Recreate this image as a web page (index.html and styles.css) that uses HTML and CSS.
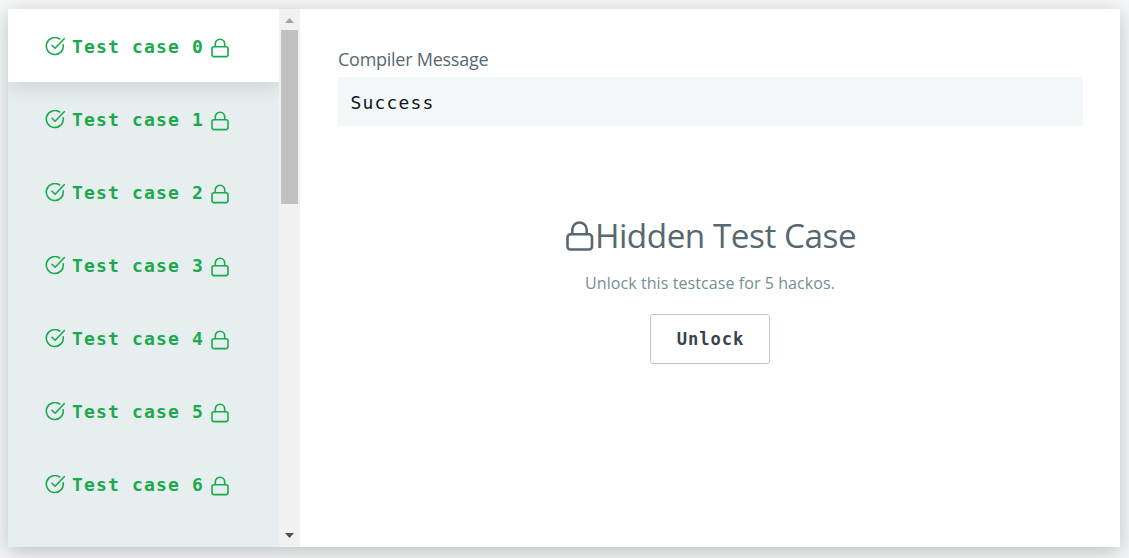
FILE: index.html
```html
<!DOCTYPE html>
<html lang="en">
<head>
<meta charset="utf-8">
<title>Test cases</title>
<link rel="stylesheet" href="styles.css">
</head>
<body>
<svg class="defs" width="0" height="0">
  <symbol id="check" viewBox="0 0 20 20"><path d="M14.600 2A8.500 8.500 0 1 0 18.200 7.700M7 8.300l3.100 3L19.200 1.700"/></symbol>
  <symbol id="lock" viewBox="0 0 18 20"><rect x="1" y="8.700" width="16" height="9.900" rx="2"/><path d="M4.300 8.500V5.900a4.700 4.700 0 0 1 9.400 0v2.600"/></symbol>
</svg>
<main class="panel">
  <nav class="cases">
    <button class="case active"><svg class="check"><use href="#check"/></svg><span>Test case 0</span><svg class="lock"><use href="#lock"/></svg></button>
    <button class="case"><svg class="check"><use href="#check"/></svg><span>Test case 1</span><svg class="lock"><use href="#lock"/></svg></button>
    <button class="case"><svg class="check"><use href="#check"/></svg><span>Test case 2</span><svg class="lock"><use href="#lock"/></svg></button>
    <button class="case"><svg class="check"><use href="#check"/></svg><span>Test case 3</span><svg class="lock"><use href="#lock"/></svg></button>
    <button class="case"><svg class="check"><use href="#check"/></svg><span>Test case 4</span><svg class="lock"><use href="#lock"/></svg></button>
    <button class="case"><svg class="check"><use href="#check"/></svg><span>Test case 5</span><svg class="lock"><use href="#lock"/></svg></button>
    <button class="case"><svg class="check"><use href="#check"/></svg><span>Test case 6</span><svg class="lock"><use href="#lock"/></svg></button>
  </nav>
  <div class="scrollbar">
    <svg class="arrow" viewBox="0 0 9 5"><path fill="#a3a3a3" d="M0 5 4.500 0 9 5z"/></svg>
    <div class="thumb"></div>
    <svg class="arrow down" viewBox="0 0 9 5"><path fill="#505050" d="M0 0h9L4.500 5z"/></svg>
  </div>
  <section class="detail">
    <div class="label">Compiler Message</div>
    <div class="message">Success</div>
    <div class="hidden-case">
      <h1 class="title"><svg class="title-lock" viewBox="0 0 28 30"><rect x="1.500" y="13.300" width="24.500" height="15.200" rx="3"/><path d="M6.300 13V8.700a7.200 7.200 0 0 1 14.400 0V13"/></svg><span>Hidden Test Case</span></h1>
      <p class="hint">Unlock this testcase for 5 hackos.</p>
      <button class="unlock">Unlock</button>
    </div>
  </section>
</main>
</body>
</html>
```
FILE: styles.css
```css
* { box-sizing: border-box; }
body {
  margin: 0;
  height: 558px;
  padding: 9px 9px 11px 8px;
  overflow: hidden;
  background: #f3f7f7;
  font-family: "Open Sans", sans-serif;
}
button { margin: 0; font: inherit; }
.defs { display: block; position: absolute; }
.panel {
  display: flex;
  height: 538px;
  background: #fff;
  box-shadow: 0 5px 20px rgba(0, 0, 0, 0.22);
}
.cases { width: 271px; background: #e6eeef; overflow: hidden; }
.case {
  display: flex;
  align-items: center;
  width: 100%;
  height: 73px;
  padding: 0 0 0 37px;
  border: 0;
  background: transparent;
  color: #1ba94c;
  font: bold 18px "DejaVu Sans Mono", monospace;
  letter-spacing: 1.16px;
}
.case span { width: 132px; margin: 2px 0 0 7px; white-space: nowrap; text-align: left; }
.case svg { fill: none; stroke: currentColor; stroke-width: 1.6; stroke-linecap: round; stroke-linejoin: round; }
.check { width: 20px; height: 20px; margin-top: 2px; }
.lock { width: 18px; height: 20px; margin: 5px 0 0 7px; }
.active { background: #fff; box-shadow: 0 5px 20px rgba(0, 0, 0, 0.12); }
.scrollbar {
  display: flex;
  flex-direction: column;
  align-items: center;
  width: 21px;
  padding: 9px 0;
  background: #f1f1f1;
  position: relative;
}
.arrow { width: 9px; height: 5px; }
.thumb { width: 17px; height: 174px; margin-top: 7px; background: #c1c1c1; }
.down { margin-top: auto; }
.detail { flex: 1; padding: 36px 37px 0 38px; }
.label { height: 32px; line-height: 28px; font-size: 18px; letter-spacing: -0.26px; color: #576871; }
.message {
  height: 49px;
  padding-left: 12.5px;
  line-height: 52px;
  background: #f3f7f7;
  color: #0e141e;
  font-family: "DejaVu Sans Mono", monospace;
  font-size: 18px;
  letter-spacing: 1.16px;
}
.hidden-case { display: flex; flex-direction: column; align-items: center; padding: 86px 1px 0 0; }
.title {
  display: flex;
  align-items: center;
  height: 48px;
  margin: 0 0 0 2px;
  font-size: 33.3px;
  letter-spacing: -0.48px;
  font-weight: 400;
  color: #576871;
  white-space: nowrap;
}
.title span { margin-top: -2px; }
.title-lock { width: 28px; height: 30px; margin-right: 1px; fill: none; stroke: currentColor; stroke-width: 2.6; }
.hint { height: 24px; margin: 11px 0 19px; line-height: 24px; font-size: 16px; letter-spacing: 0.08px; color: #738f93; }
.unlock {
  width: 120px;
  height: 50px;
  padding: 0 0 0 1px;
  border: 1px solid #b7c9cc;
  border-radius: 3px;
  background: #fff;
  color: #39424e;
  font: bold 17.2px "DejaVu Sans Mono", monospace;
  letter-spacing: 0.9px;
}
```
